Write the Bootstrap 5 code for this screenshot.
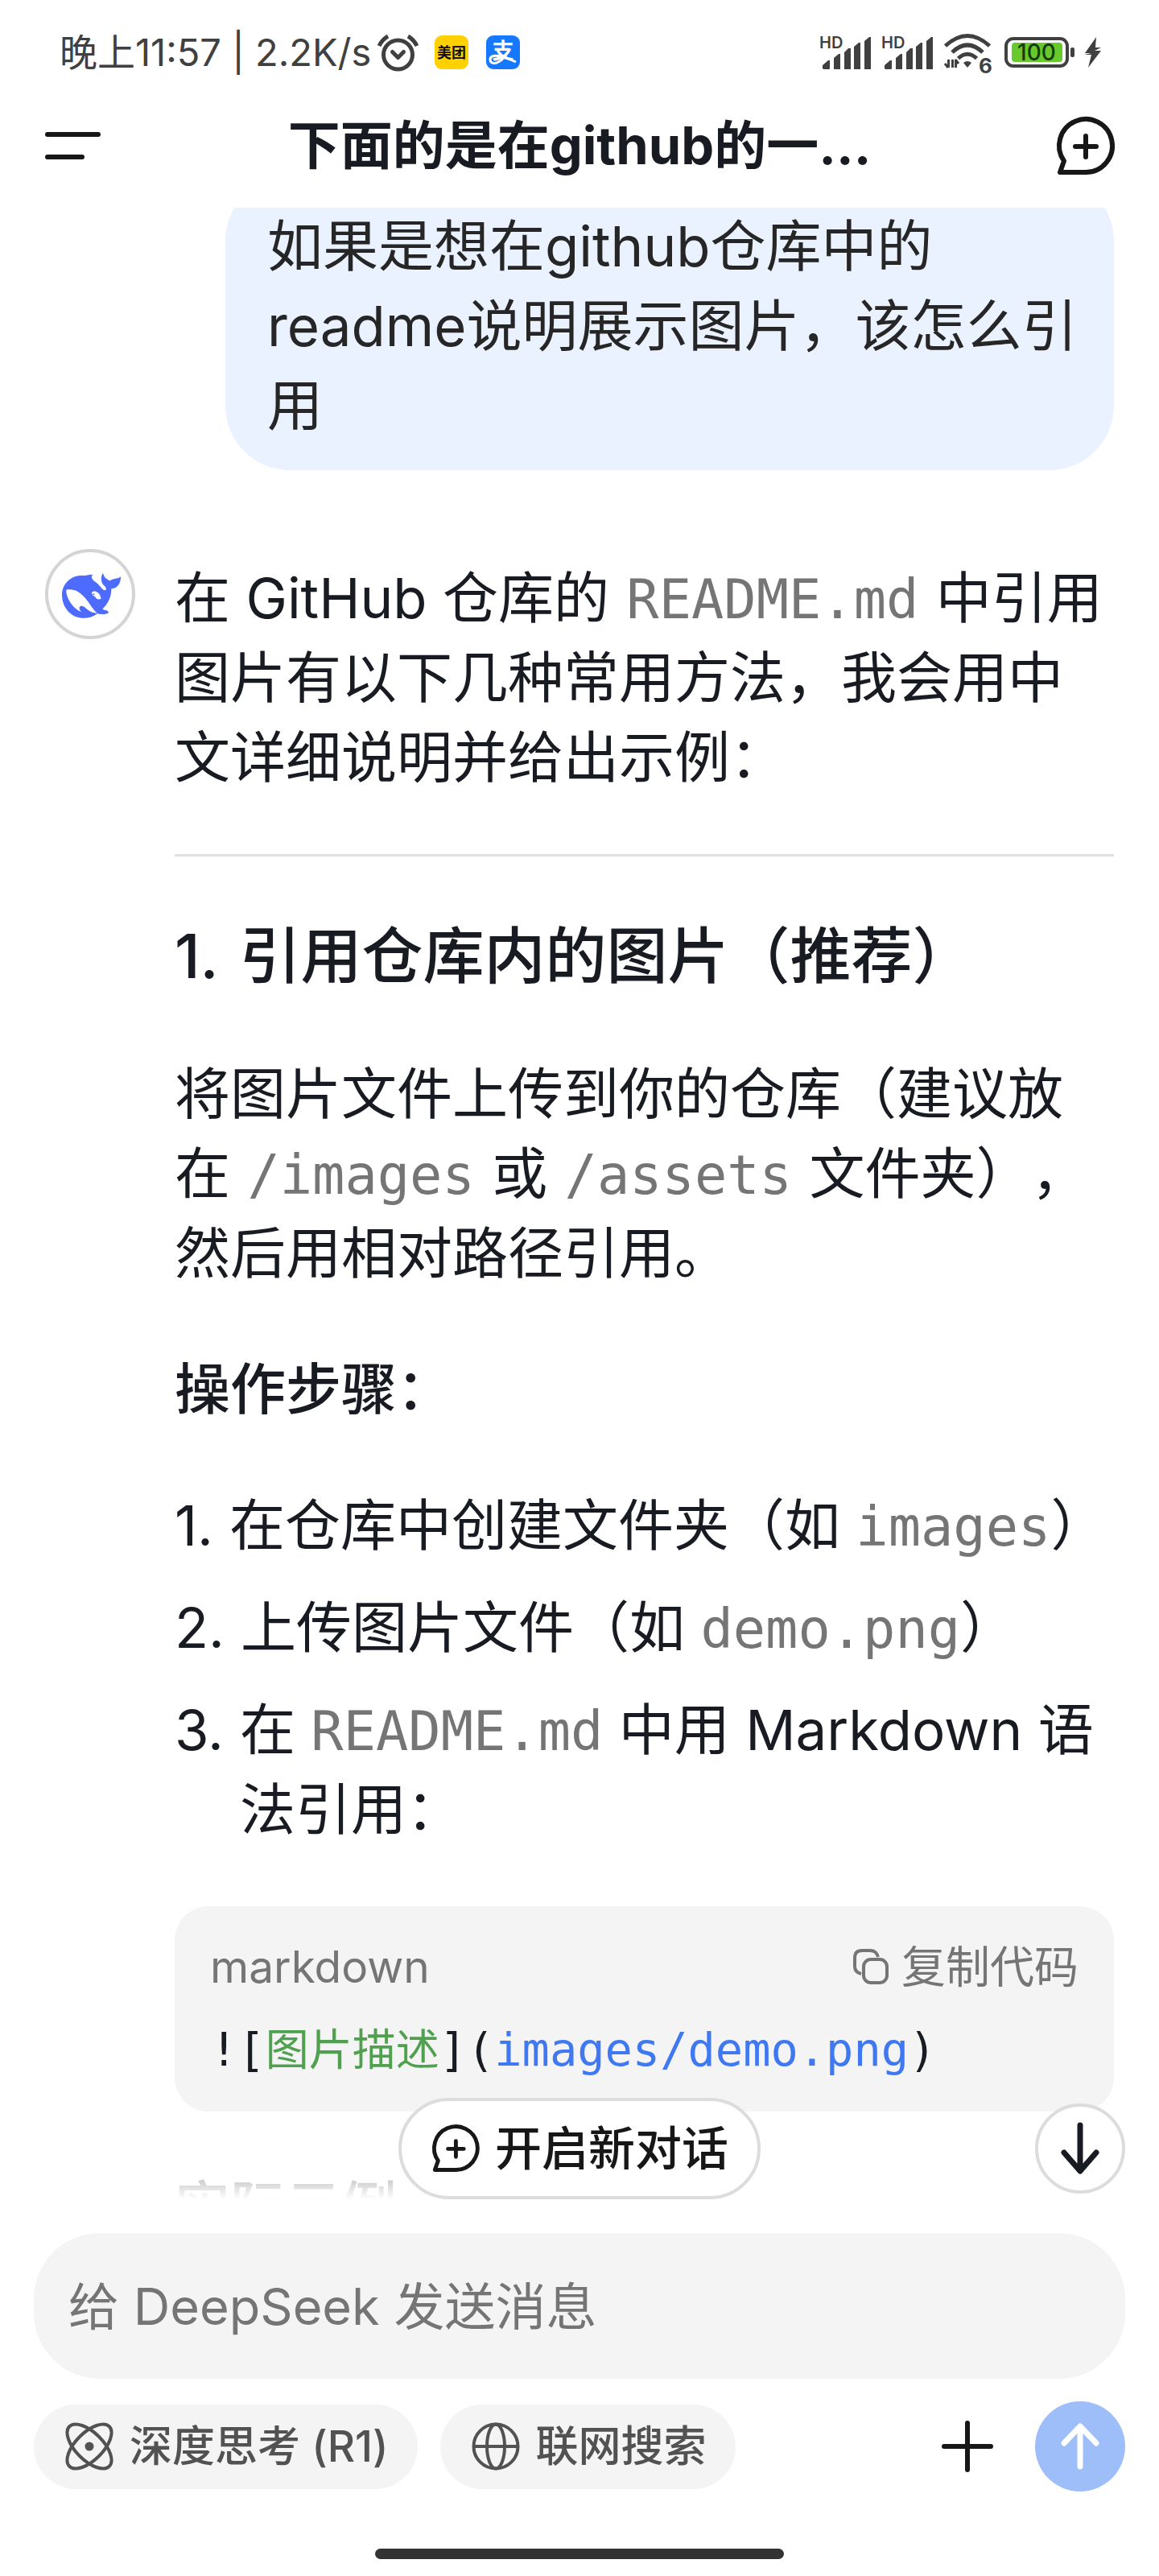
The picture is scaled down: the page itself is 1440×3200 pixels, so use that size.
<!DOCTYPE html>
<html lang="zh-CN">
<head>
<meta charset="utf-8">
<meta name="viewport" content="width=device-width, initial-scale=1">
<title>DeepSeek</title>
<link href="https://cdn.jsdelivr.net/npm/bootstrap@5.3.0/dist/css/bootstrap.min.css" rel="stylesheet">
<style>
body{font-family:Inter,"Noto Sans CJK SC",sans-serif;color:#181b22;background:#fff;font-size:69px;line-height:99px;text-spacing-trim:space-all}
svg{display:block;flex:none;overflow:visible}
.ico-btn{padding:0;border:0;background:none;color:#171717;flex:none}
.status-bar{height:130px;padding:0 71px 0 74px;color:#404040;font-size:47px;line-height:60px}
.status-icons{gap:15px}
.title-bar{height:128px;padding:0 56px 26px}
.title-bar h1{font-size:65px;line-height:80px;font-weight:700;margin:0}
.app-tile{width:42px;height:42px}
.app-tiles{gap:22px;margin-left:20px}
.thread{padding:0 56px}
.bubble{margin-top:-39px;width:1104px;max-width:84%;padding:38px 44px 30px 52px;border-radius:80px;background:#eaf2ff;color:#262626}
.reply{margin-top:98px;gap:49px}
.avatar{width:112px;height:112px;border:4px solid #d4d4d4;border-radius:50%}
.avatar svg{margin:-4px}
.prose{gap:70px;padding-top:12px;min-width:0}
.prose p,.prose h2,.prose h3,.prose ol{margin:0}
.prose hr{margin:0;border-top:3px solid #e0e0e0;opacity:1}
.prose h2{font-size:76px;line-height:106px;font-weight:500;gap:26px}
.prose h3{font-size:69px;line-height:99px;font-weight:500}
.prose ol{gap:28px}
.prose li{gap:20px}
code{font-family:"DejaVu Sans Mono",monospace;font-size:67px;line-height:1;color:#757575}
.prose p code{margin:0 2px}
.code-card{background:#f4f4f4;border-radius:42px;padding:36px 44px 35px}
.code-head{font-size:55px;line-height:78px;color:#757575;margin-bottom:24px}
.code-head button{color:#757575}
.code-line{font-family:"DejaVu Sans Mono","Noto Sans CJK SC",monospace;font-size:57px;line-height:80px;margin:0;overflow:hidden}
.code-line .alt{color:#50a14f;font-size:54px}
.code-line .url{color:#4078f2}
.fade-out{height:110px;background:linear-gradient(to bottom,rgba(255,255,255,0),#fff)}
.pill{border:4px solid #dcdcdc;background:#fff;color:#171717;border-radius:63px;height:126px;padding:0 36px 0 38px;font-size:58px;font-weight:500;gap:20px}
.to-end{width:112px;height:112px;border:4px solid #dcdcdc;border-radius:50%;background:#fff;right:42px;bottom:7px}
.composer{padding:42px 42px 21px}
.composer .form-control{height:181px;border:0;border-radius:82px;background:#f4f4f4;padding:0 43px;font-size:63px;color:#181b22}
.composer .form-control::placeholder{color:#757575;opacity:1}
.tool-row{margin-top:28px;gap:28px}
.chip{height:105px;border:0;border-radius:53px;background:#f4f4f4;color:#525252;padding:0 36px 0 39px;font-size:53px;font-weight:500;gap:20px}
.send{width:112px;height:112px;border-radius:50%;background:#9dbef9;color:#fff}
.home-bar{width:508px;height:13px;border-radius:7px;background:#333;margin:71px auto 0}
</style>
</head>
<body>
<div class="d-flex flex-column vh-100 overflow-hidden">
  <div class="status-bar d-flex align-items-center justify-content-between flex-shrink-0">
    <div class="d-flex align-items-center">
      <span class="text-nowrap">晚上11:57 | 2.2K/s</span>
      <svg class="ms-2" width="51" height="46" viewBox="0 0 51 46" fill="none" stroke="#404040" stroke-width="5"><circle cx="25.500" cy="26" r="18"/><path d="M18.500 22.500l7 7 7-7" stroke-linecap="round" stroke-linejoin="round"/><path d="M2 15Q6 7 13 3M49 15Q45 7 38 3"/></svg>
      <div class="app-tiles d-flex">
      <svg class="app-tile" viewBox="0 0 42 42"><rect width="42" height="42" rx="9" fill="#ffd100"/><text x="21" y="28" text-anchor="middle" font-size="18" font-weight="700" fill="#111">美团</text></svg>
      <svg class="app-tile" viewBox="0 0 42 42"><rect width="42" height="42" rx="9" fill="#1677ff"/><text x="21" y="29" text-anchor="middle" font-size="27" font-weight="700" fill="#fff">支</text><path d="M26 22C19 34 6 39 5 30C5 22 20 25 37 33" fill="none" stroke="#fff" stroke-width="3"/></svg>
      </div>
    </div>
    <div class="status-icons d-flex align-items-center">
      <svg width="62" height="44" viewBox="0 0 62 44" fill="#404040"><text x="-1" y="17" font-size="20" font-weight="600">HD</text><path d="M3 42v-4l7-6h2v10a1 1 0 0 1-1 1H4zM17 43V29l6-5h2v19zM30 43V22l5-5h3v26zM42 43V15l6-5h2v33zM55 43V8l6-5h2v40z"/></svg>
      <svg width="62" height="44" viewBox="0 0 62 44" fill="#404040"><text x="-1" y="17" font-size="20" font-weight="600">HD</text><path d="M3 42v-4l7-6h2v10a1 1 0 0 1-1 1H4zM17 43V29l6-5h2v19zM30 43V22l5-5h3v26zM42 43V15l6-5h2v33zM55 43V8l6-5h2v40z"/></svg>
      <svg width="60" height="48" viewBox="0 0 60 48" fill="none" stroke="#404040" stroke-width="5"><path d="M1.500 16Q29 -9 56.500 16M10 24Q29 6 48 24M17.500 31.500Q29 21 40.500 31.500"/><path d="M24 37Q29 33 34 37L29 43z" fill="#404040" stroke="none"/><path d="M5.500 33v10M10.500 33v10M14.500 43V33" stroke-width="3"/><path d="M1 38l4 5M14 33l4 5" stroke-width="3"/><text x="43" y="50" font-size="26" font-weight="700" fill="#404040" stroke="none">6</text></svg>
      <svg width="88" height="38" viewBox="0 0 88 38"><rect x="2" y="2" width="76" height="34" rx="9" fill="#fff" stroke="#404040" stroke-width="4"/><rect x="9" y="7" width="63" height="24" rx="4" fill="#68c92f"/><rect x="82" y="13" width="5" height="12" rx="2" fill="#404040"/><text x="40" y="29" text-anchor="middle" font-size="28" font-weight="500" fill="#173b06">100</text></svg>
      <svg width="18" height="38" viewBox="5 0 18 38" fill="#404040"><path d="M16 0L2 20h8L1 22h9L6 38 22 17h-8l8-4h-7z"/></svg>
    </div>
  </div>

  <header class="title-bar d-flex align-items-center justify-content-between flex-shrink-0">
    <button class="ico-btn" type="button" aria-label="菜单"><svg width="71" height="44" viewBox="0 0 71 44" stroke="currentColor" stroke-width="6" stroke-linecap="round"><path d="M3 8h63M3 36h43"/></svg></button>
    <h1 class="text-truncate">下面的是在github的一...</h1>
    <button class="ico-btn" type="button" aria-label="新对话"><svg width="71" height="71" viewBox="0 0 71 71" fill="none" stroke="currentColor" stroke-width="6" stroke-linecap="round" stroke-linejoin="round"><path d="M36 68H4l5-14A33 33 0 1 1 36 68zM36 23v26M23 36h26"/></svg></button>
  </header>

  <main class="position-relative flex-grow-1 overflow-hidden">
    <div class="thread">
      <div class="bubble ms-auto">如果是想在github仓库中的readme说明展示图片，该怎么引用</div>
      <div class="reply d-flex align-items-start">
        <div class="avatar flex-shrink-0">
          <svg width="112" height="112" viewBox="48 36 336 336"><path fill="#4d6bfe" d="M111 205C112 165 145 134 185 135C200 136 210 130 226 131C217 140 222 150 240 162C255 174 262 190 272 190C277 187 276 180 272 176C257 166 253 146 263 126C268 132 267 144 282 149C287 155 289 155 296 151C308 145 322 147 330 139C331 160 320 183 295 184C296 215 282 240 262 260C272 266 283 262 285 274C276 281 255 280 243 277C225 290 205 295 185 293C140 290 110 250 111 205Z"/><path fill="#fff" d="M127 188C125 215 150 258 184 270C170 258 176 244 188 249C203 254 210 274 243 275C225 262 215 238 195 216C178 196 155 182 127 188ZM222 197C228 192 238 193 245 199C253 205 254 212 257 221C248 226 236 222 234 212C228 212 222 206 222 197Z"/><circle cx="229" cy="205" r="3" fill="#4d6bfe"/></svg>
        </div>
        <article class="prose d-flex flex-column flex-grow-1">
          <p>在 GitHub 仓库的 <code>README.md</code> 中引用图片有以下几种常用方法，我会用中文详细说明并给出示例：</p>
          <hr>
          <h2 class="d-flex"><span>1.</span><span>引用仓库内的图片（推荐）</span></h2>
          <p>将图片文件上传到你的仓库（建议放在 <code>/images</code> 或 <code>/assets</code> 文件夹），然后用相对路径引用。</p>
          <h3>操作步骤：</h3>
          <ol class="list-unstyled d-flex flex-column">
            <li class="d-flex"><span>1.</span><div>在仓库中创建文件夹（如 <code>images</code>）</div></li>
            <li class="d-flex"><span>2.</span><div>上传图片文件（如 <code>demo.png</code>）</div></li>
            <li class="d-flex"><span>3.</span><div>在 <code>README.md</code> 中用 Markdown 语法引用：</div></li>
          </ol>
          <div class="code-card">
            <div class="code-head d-flex align-items-center justify-content-between">
              <span>markdown</span>
              <button class="ico-btn d-flex align-items-center" type="button"><svg width="44" height="44" viewBox="0 0 44 44" fill="none" stroke="currentColor" stroke-width="4"><rect x="13" y="13" width="29" height="29" rx="9"/><path d="M10 31Q2 29 2 22V11Q2 2 11 2H21Q29 2 31 10"/></svg><span class="ms-3">复制代码</span></button>
            </div>
            <pre class="code-line">![<span class="alt">图片描述</span>](<span class="url">images/demo.png</span>)</pre>
          </div>
          <h3>实际示例</h3>
        </article>
      </div>
    </div>
    <div class="fade-out position-absolute bottom-0 start-0 end-0"></div>
    <div class="position-absolute bottom-0 start-0 end-0 d-flex justify-content-center">
      <button class="pill d-flex align-items-center text-nowrap" type="button"><svg width="58" height="58" viewBox="0 0 71 71" fill="none" stroke="currentColor" stroke-width="6" stroke-linecap="round" stroke-linejoin="round"><path d="M36 68H4l5-14A33 33 0 1 1 36 68zM36 24v24M24 36h24"/></svg>开启新对话</button>
    </div>
    <button class="to-end ico-btn position-absolute d-flex align-items-center justify-content-center" type="button" aria-label="滚动到底部"><svg width="56" height="66" viewBox="0 0 56 66" fill="none" stroke="#181b22" stroke-width="7" stroke-linecap="round" stroke-linejoin="round"><path d="M28 4v56M8 38l20 23 20-23"/></svg></button>
  </main>

  <footer class="composer flex-shrink-0">
    <label class="visually-hidden" for="msg">消息</label>
    <input id="msg" class="form-control" type="text" placeholder="给 DeepSeek 发送消息">
    <div class="tool-row d-flex align-items-center">
      <button class="chip d-flex align-items-center text-nowrap" type="button"><svg width="60" height="60" viewBox="0 0 60 60" fill="none" stroke="currentColor" stroke-width="4"><ellipse cx="30" cy="30" rx="35" ry="17" transform="rotate(45 30 30)"/><ellipse cx="30" cy="30" rx="35" ry="17" transform="rotate(-45 30 30)"/><circle cx="30" cy="30" r="5.500" fill="currentColor" stroke="none"/></svg>深度思考 (R1)</button>
      <button class="chip d-flex align-items-center text-nowrap" type="button"><svg width="60" height="60" viewBox="0 0 60 60" fill="none" stroke="currentColor" stroke-width="4"><circle cx="30" cy="30" r="27.500"/><ellipse cx="30" cy="30" rx="11" ry="27.500"/><path d="M2 30h56"/></svg>联网搜索</button>
      <button class="ico-btn ms-auto me-4" type="button" aria-label="添加"><svg width="64" height="64" viewBox="0 0 64 64" stroke="currentColor" stroke-width="6" stroke-linecap="round"><path d="M32 3v58M3 32h58"/></svg></button>
      <button class="send ico-btn d-flex align-items-center justify-content-center" type="button" aria-label="发送"><svg width="50" height="58" viewBox="0 0 50 58" fill="none" stroke="#fff" stroke-width="7" stroke-linecap="round" stroke-linejoin="round"><path d="M25 54V5M5 25L25 4l20 21"/></svg></button>
    </div>
    <div class="home-bar"></div>
  </footer>
</div>
<script src="https://cdn.jsdelivr.net/npm/bootstrap@5.3.0/dist/js/bootstrap.bundle.min.js"></script>
</body>
</html>
